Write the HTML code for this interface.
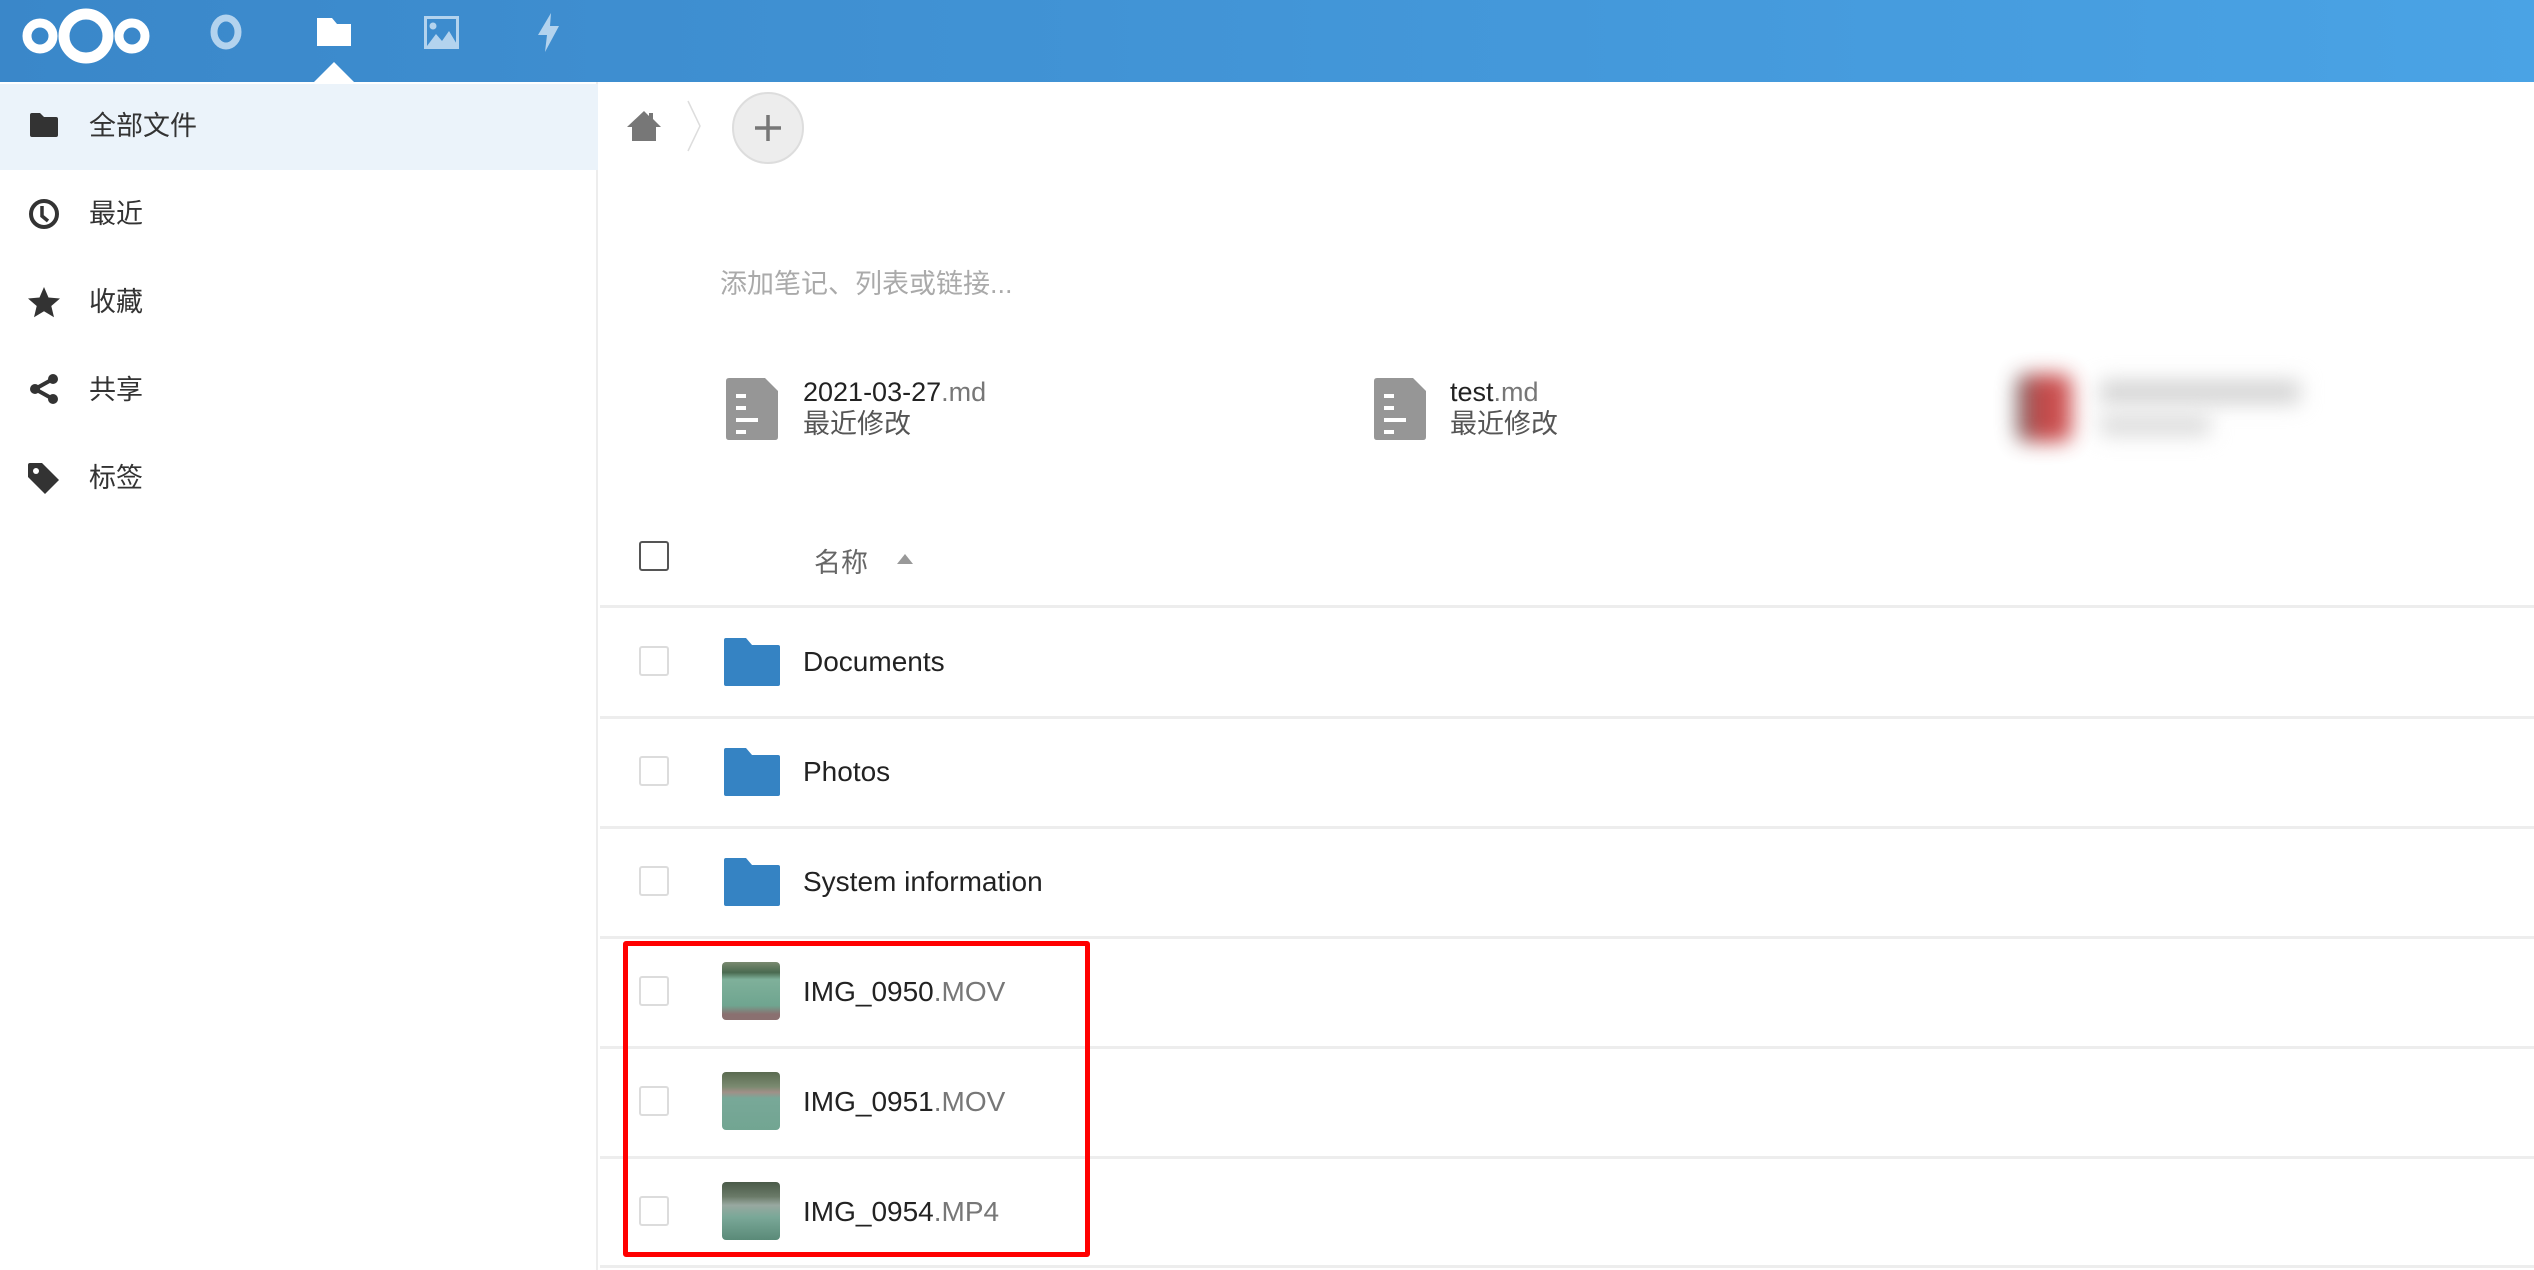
<!DOCTYPE html>
<html><head><meta charset="utf-8"><style>
*{margin:0;padding:0;box-sizing:border-box}
body{width:2534px;height:1270px;overflow:hidden;background:#fff;font-family:"Liberation Sans","Noto Sans CJK SC",sans-serif;position:relative}
.hdr{position:absolute;left:0;top:0;width:2534px;height:82px;background:linear-gradient(90deg,#3a87c9,#4aa3e5)}
.side{position:absolute;left:0;top:82px;width:598px;height:1188px;border-right:2px solid #ededed}
.act{position:absolute;left:0;top:84px;width:598px;height:86px;background:#ebf3fa}
.nav{position:absolute;left:89px;font-size:27px;color:#333;line-height:40px}
.ab{position:absolute}
.t{position:absolute;font-size:28px;color:#222;line-height:36px;white-space:nowrap}
.t span{color:#777}
.cb{position:absolute;left:639px;width:30px;height:30px;border:2px solid #dcdcdc;border-radius:3px}
.ln{position:absolute;left:600px;width:1934px;height:3px;background:#ededed}
.th{position:absolute;left:722px;width:58px;height:58px;border-radius:4px}
</style></head><body>
<div class="hdr"></div>
<svg class="ab" style="left:22px;top:4px" width="130" height="64" viewBox="0 0 130 64">
<ellipse cx="64" cy="32" rx="22" ry="22" fill="none" stroke="#fff" stroke-width="11"/>
<ellipse cx="18" cy="32" rx="13" ry="13" fill="none" stroke="#fff" stroke-width="9"/>
<ellipse cx="110" cy="32" rx="13" ry="13" fill="none" stroke="#fff" stroke-width="9"/>
</svg>
<svg class="ab" style="left:208px;top:12px" width="36" height="40"><ellipse cx="18" cy="20" rx="12" ry="14" fill="none" stroke="#b3d3ee" stroke-width="7"/></svg>
<svg class="ab" style="left:316px;top:16px" width="36" height="32"><path d="M1 2h15l5 6h14v22H1z" fill="#fff"/></svg>
<svg class="ab" style="left:424px;top:16px" width="36" height="34"><rect x="1.5" y="1.5" width="32" height="30" fill="none" stroke="#b3d3ee" stroke-width="3"/><circle cx="9" cy="10" r="3.5" fill="#b3d3ee"/><path d="M3 30l9-12 6 7 7-10 9 15z" fill="#b3d3ee"/></svg>
<svg class="ab" style="left:536px;top:13px" width="28" height="40"><path d="M15 0L2 22h9l-2 17 14-26h-9z" fill="#b3d3ee"/></svg>
<svg class="ab" style="left:314px;top:62px" width="40" height="20"><path d="M0 20L20 0l20 20z" fill="#fff"/></svg>

<div class="side"></div>
<div class="act"></div>
<svg class="ab" style="left:30px;top:113px" width="28" height="24"><path d="M0 2q0-2 2-2h8l4 4h12q2 0 2 2v16q0 2-2 2H2q-2 0-2-2z" fill="#333"/></svg>
<div class="nav" style="top:106px">全部文件</div>
<svg class="ab" style="left:28px;top:198px" width="32" height="32"><circle cx="16" cy="16" r="13" fill="none" stroke="#333" stroke-width="4"/><path d="M14 8v10l6 5" fill="none" stroke="#333" stroke-width="3.5"/></svg>
<div class="nav" style="top:194px">最近</div>
<svg class="ab" style="left:27px;top:286px" width="34" height="32"><path d="M17 1l4.5 10.5 11.5 1-8.7 7.5 2.7 11.2L17 25.3 7 31.2l2.7-11.2L1 12.5l11.5-1z" fill="#333"/></svg>
<div class="nav" style="top:282px">收藏</div>
<svg class="ab" style="left:28px;top:374px" width="32" height="30"><path d="M25 5L7 15l18 10" fill="none" stroke="#333" stroke-width="4"/><circle cx="25" cy="5" r="5" fill="#333"/><circle cx="7" cy="15" r="5" fill="#333"/><circle cx="25" cy="25" r="5" fill="#333"/></svg>
<div class="nav" style="top:370px">共享</div>
<svg class="ab" style="left:28px;top:463px" width="32" height="32"><path d="M0 2q0-2 2-2h12l17 17-14 14L0 14z" fill="#333"/><circle cx="8" cy="8" r="3" fill="#fff"/></svg>
<div class="nav" style="top:458px">标签</div>

<svg class="ab" style="left:627px;top:111px" width="34" height="30"><path d="M17 0L0 16h5v14h24V16h5L26 8V2h-4v3z" fill="#777"/></svg>
<svg class="ab" style="left:686px;top:100px" width="16" height="52"><path d="M2 1l12 25L2 51" fill="none" stroke="#ddd" stroke-width="1.5"/></svg>
<div class="ab" style="left:732px;top:92px;width:72px;height:72px;border-radius:50%;background:#ededed;border:2px solid #ddd"></div>
<svg class="ab" style="left:755px;top:115px" width="26" height="26"><path d="M13 0v26M0 13h26" stroke="#777" stroke-width="3.5"/></svg>

<div class="ab" style="left:720px;top:262px;font-size:27px;color:#aaa">添加笔记、列表或链接...</div>

<svg class="ab" style="left:726px;top:378px" width="52" height="62"><path d="M0 3q0-3 3-3h36l13 13v46q0 3-3 3H3q-3 0-3-3z" fill="#969696"/><path d="M10 18h10M10 30h10M10 42h22M10 54h10" stroke="#fff" stroke-width="4"/></svg>
<div class="t" style="left:803px;top:374px;font-size:27px">2021-03-27<span>.md</span></div>
<div class="t" style="left:803px;top:406px;font-size:27px;color:#555">最近修改</div>
<svg class="ab" style="left:1374px;top:378px" width="52" height="62"><path d="M0 3q0-3 3-3h36l13 13v46q0 3-3 3H3q-3 0-3-3z" fill="#969696"/><path d="M10 18h10M10 30h10M10 42h22M10 54h10" stroke="#fff" stroke-width="4"/></svg>
<div class="t" style="left:1450px;top:374px;font-size:27px">test<span>.md</span></div>
<div class="t" style="left:1450px;top:406px;font-size:27px;color:#555">最近修改</div>
<div class="ab" style="left:2016px;top:374px;width:56px;height:68px;background:linear-gradient(90deg,#666,#b33 40%,#c44);filter:blur(10px);border-radius:10px;opacity:.9"></div>
<div class="ab" style="left:2100px;top:380px;width:200px;height:24px;background:#d4d4d4;filter:blur(10px)"></div>
<div class="ab" style="left:2100px;top:414px;width:110px;height:22px;background:#dcdcdc;filter:blur(10px)"></div>

<div class="cb" style="top:541px;border-color:#555;border-width:2px"></div>
<div class="ab" style="left:814px;top:541px;font-size:27px;color:#666">名称</div>
<svg class="ab" style="left:897px;top:554px" width="16" height="10"><path d="M0 10L8 0l8 10z" fill="#999"/></svg>
<div class="ln" style="top:605px"></div>

<div class="cb" style="top:646px"></div>
<svg class="ab" style="left:724px;top:638px" width="56" height="48"><path d="M0 2q0-2 2-2h20l6 7h26q2 0 2 2v37q0 2-2 2H2q-2 0-2-2z" fill="#3583c3"/></svg>
<div class="t" style="left:803px;top:644px">Documents</div>
<div class="ln" style="top:716px"></div>

<div class="cb" style="top:756px"></div>
<svg class="ab" style="left:724px;top:748px" width="56" height="48"><path d="M0 2q0-2 2-2h20l6 7h26q2 0 2 2v37q0 2-2 2H2q-2 0-2-2z" fill="#3583c3"/></svg>
<div class="t" style="left:803px;top:754px">Photos</div>
<div class="ln" style="top:826px"></div>

<div class="cb" style="top:866px"></div>
<svg class="ab" style="left:724px;top:858px" width="56" height="48"><path d="M0 2q0-2 2-2h20l6 7h26q2 0 2 2v37q0 2-2 2H2q-2 0-2-2z" fill="#3583c3"/></svg>
<div class="t" style="left:803px;top:864px">System information</div>
<div class="ln" style="top:936px"></div>

<div class="cb" style="top:976px"></div>
<div class="th" style="top:962px;background:linear-gradient(180deg,#7a8a70 0%,#4a6a50 18%,#7fb09a 30%,#6fa590 75%,#8a7070 90%)"></div>
<div class="t" style="left:803px;top:974px">IMG_0950<span>.MOV</span></div>
<div class="ln" style="top:1046px"></div>

<div class="cb" style="top:1086px"></div>
<div class="th" style="top:1072px;background:linear-gradient(180deg,#5a6a50 0%,#7a8a70 25%,#a09088 35%,#78a898 45%,#72a592 100%)"></div>
<div class="t" style="left:803px;top:1084px">IMG_0951<span>.MOV</span></div>
<div class="ln" style="top:1156px"></div>

<div class="cb" style="top:1196px"></div>
<div class="th" style="top:1182px;background:linear-gradient(180deg,#4a5a48 0%,#6a7a68 25%,#98a8a0 40%,#7aa898 60%,#5a8a78 100%)"></div>
<div class="t" style="left:803px;top:1194px">IMG_0954<span>.MP4</span></div>
<div class="ln" style="top:1265px"></div>

<div class="ab" style="left:623px;top:941px;width:467px;height:316px;border:5px solid #f00;border-radius:3px"></div>
</body></html>
